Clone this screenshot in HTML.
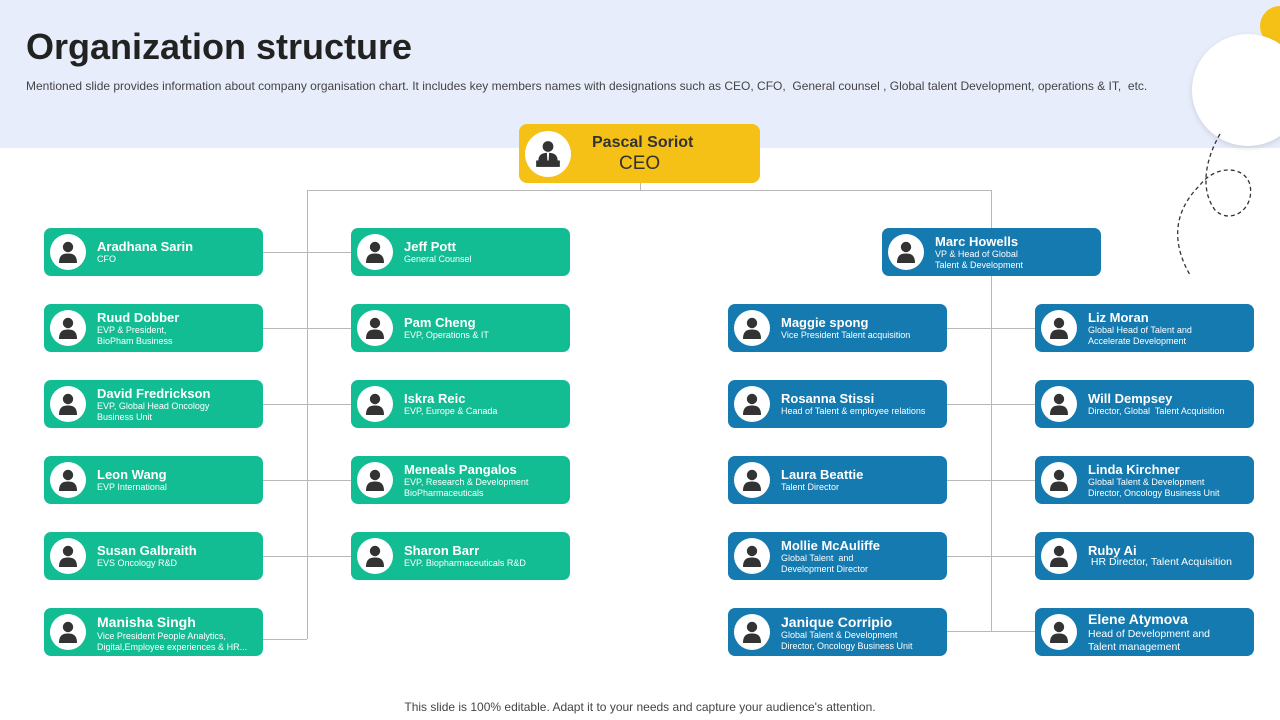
<!DOCTYPE html>
<html><head><meta charset="utf-8"><style>
*{margin:0;padding:0;box-sizing:border-box}
body{width:1280px;height:720px;position:relative;background:#fff;font-family:"Liberation Sans",Arial,sans-serif;overflow:hidden}
.hdr{position:absolute;left:0;top:0;width:1280px;height:148px;background:#e8edfb}
h1{position:absolute;left:26px;top:26px;font-size:36px;font-weight:bold;color:#222}
.sub{position:absolute;left:26px;top:79px;font-size:12px;color:#444}
.ln{position:absolute;background:#b8b8b8}
.b{position:absolute;width:219px;height:48px;border-radius:7px;color:#fff}
.g{background:#12bd93}.bl{background:#157aaf}
.av{position:absolute;left:6px;top:6px;width:36px;height:36px;border-radius:50%;background:#fff}
.av svg{position:absolute;left:6px;top:6px}
.n{position:absolute;left:53px;top:11px;font-size:13px;font-weight:bold;white-space:nowrap}
.d{position:absolute;left:53px;top:26px;font-size:9px;line-height:11px;white-space:nowrap}
.t3 .n{top:6px}.t3 .d{top:21px}
</style></head><body>
<div class="hdr"></div>
<h1>Organization structure</h1>
<div class="sub">Mentioned slide provides information about company organisation chart. It includes key members names with designations such as CEO, CFO,&nbsp; General counsel , Global talent Development, operations &amp; IT,&nbsp; etc.</div>
<div style="position:absolute;left:1260px;top:6px;width:40px;height:40px;border-radius:50%;background:#f5c116"></div>
<div style="position:absolute;left:1192px;top:34px;width:112px;height:112px;border-radius:50%;background:#fff;box-shadow:0 2px 6px rgba(0,0,0,0.12)"></div>
<svg style="position:absolute;left:1160px;top:130px" width="110" height="150"><path d="M60 4 C45 30 40 60 55 80 C70 95 95 80 90 55 C85 35 55 35 40 55 C15 80 10 110 30 145" fill="none" stroke="#333" stroke-width="1.3" stroke-dasharray="4 3"/></svg>
<!-- CEO -->
<div style="position:absolute;left:519px;top:124px;width:241px;height:59px;border-radius:8px;background:#f5c116">
<div style="position:absolute;left:6px;top:7px;width:46px;height:46px;border-radius:50%;background:#fff"><svg style="position:absolute;left:10px;top:9px" width="26" height="28" viewBox="0 0 24 26"><circle cx="12" cy="6" r="5" fill="#333"/><path d="M3 20 C3 13 7 12 12 12 C17 12 21 13 21 20Z" fill="#333"/><rect x="1" y="19" width="22" height="6" fill="#333"/><path d="M11 12 L13 12 L12.6 19 L11.4 19Z" fill="#fff"/></svg></div>
<div style="position:absolute;left:73px;top:10px;font-size:16px;font-weight:bold;color:#333">Pascal Soriot</div>
<div style="position:absolute;left:100px;top:29px;font-size:19px;color:#333">CEO</div>
</div>
<!-- lines -->
<div class="ln" style="left:640px;top:183px;width:1px;height:8px"></div>
<div class="ln" style="left:307px;top:190px;width:685px;height:1px"></div>
<div class="ln" style="left:307px;top:190px;width:1px;height:449px"></div>
<div class="ln" style="left:991px;top:190px;width:1px;height:441px"></div>
<div class="ln" style="left:263px;top:252px;width:88px;height:1px"></div>
<div class="ln" style="left:263px;top:328px;width:88px;height:1px"></div>
<div class="ln" style="left:263px;top:404px;width:88px;height:1px"></div>
<div class="ln" style="left:263px;top:480px;width:88px;height:1px"></div>
<div class="ln" style="left:263px;top:556px;width:88px;height:1px"></div>
<div class="ln" style="left:263px;top:639px;width:44px;height:1px"></div>
<div class="ln" style="left:947px;top:328px;width:88px;height:1px"></div>
<div class="ln" style="left:947px;top:404px;width:88px;height:1px"></div>
<div class="ln" style="left:947px;top:480px;width:88px;height:1px"></div>
<div class="ln" style="left:947px;top:556px;width:88px;height:1px"></div>
<div class="ln" style="left:947px;top:631px;width:88px;height:1px"></div>

<svg width="0" height="0" style="position:absolute"><defs><symbol id="p" viewBox="0 0 24 24"><circle cx="12" cy="7" r="5.2" fill="#333"/><path d="M3 23 C3 15 7 13.5 12 13.5 C17 13.5 21 15 21 23Z" fill="#333"/></symbol></defs></svg>

<div class="b g" style="left:44px;top:228px"><div class="av"><svg width="24" height="24"><use href="#p"/></svg></div><div class="n">Aradhana Sarin</div><div class="d">CFO</div></div>
<div class="b g t3" style="left:44px;top:304px"><div class="av"><svg width="24" height="24"><use href="#p"/></svg></div><div class="n">Ruud Dobber</div><div class="d">EVP &amp; President,<br>BioPham Business</div></div>
<div class="b g t3" style="left:44px;top:380px"><div class="av"><svg width="24" height="24"><use href="#p"/></svg></div><div class="n">David Fredrickson</div><div class="d">EVP, Global Head Oncology<br>Business Unit</div></div>
<div class="b g" style="left:44px;top:456px"><div class="av"><svg width="24" height="24"><use href="#p"/></svg></div><div class="n">Leon Wang</div><div class="d">EVP International</div></div>
<div class="b g" style="left:44px;top:532px"><div class="av"><svg width="24" height="24"><use href="#p"/></svg></div><div class="n">Susan Galbraith</div><div class="d">EVS Oncology R&amp;D</div></div>
<div class="b g t3" style="left:44px;top:608px"><div class="av"><svg width="24" height="24"><use href="#p"/></svg></div><div class="n" style="font-size:14px">Manisha Singh</div><div class="d" style="top:23px">Vice President People Analytics,<br>Digital,Employee experiences &amp; HR...</div></div>

<div class="b g" style="left:351px;top:228px"><div class="av"><svg width="24" height="24"><use href="#p"/></svg></div><div class="n">Jeff Pott</div><div class="d">General Counsel</div></div>
<div class="b g" style="left:351px;top:304px"><div class="av"><svg width="24" height="24"><use href="#p"/></svg></div><div class="n">Pam Cheng</div><div class="d">EVP, Operations &amp; IT</div></div>
<div class="b g" style="left:351px;top:380px"><div class="av"><svg width="24" height="24"><use href="#p"/></svg></div><div class="n">Iskra Reic</div><div class="d">EVP, Europe &amp; Canada</div></div>
<div class="b g t3" style="left:351px;top:456px"><div class="av"><svg width="24" height="24"><use href="#p"/></svg></div><div class="n">Meneals Pangalos</div><div class="d">EVP, Research &amp; Development<br>BioPharmaceuticals</div></div>
<div class="b g" style="left:351px;top:532px"><div class="av"><svg width="24" height="24"><use href="#p"/></svg></div><div class="n">Sharon Barr</div><div class="d">EVP. Biopharmaceuticals R&amp;D</div></div>

<div class="b bl t3" style="left:882px;top:228px"><div class="av"><svg width="24" height="24"><use href="#p"/></svg></div><div class="n">Marc Howells</div><div class="d">VP &amp; Head of Global<br>Talent &amp; Development</div></div>

<div class="b bl" style="left:728px;top:304px"><div class="av"><svg width="24" height="24"><use href="#p"/></svg></div><div class="n">Maggie spong</div><div class="d">Vice President Talent acquisition</div></div>
<div class="b bl" style="left:728px;top:380px"><div class="av"><svg width="24" height="24"><use href="#p"/></svg></div><div class="n">Rosanna Stissi</div><div class="d">Head of Talent &amp; employee relations</div></div>
<div class="b bl" style="left:728px;top:456px"><div class="av"><svg width="24" height="24"><use href="#p"/></svg></div><div class="n">Laura Beattie</div><div class="d">Talent Director</div></div>
<div class="b bl t3" style="left:728px;top:532px"><div class="av"><svg width="24" height="24"><use href="#p"/></svg></div><div class="n">Mollie McAuliffe</div><div class="d">Global Talent&nbsp; and<br>Development Director</div></div>
<div class="b bl t3" style="left:728px;top:608px"><div class="av"><svg width="24" height="24"><use href="#p"/></svg></div><div class="n" style="font-size:14px">Janique Corripio</div><div class="d" style="top:22px">Global Talent &amp; Development<br>Director, Oncology Business Unit</div></div>

<div class="b bl t3" style="left:1035px;top:304px"><div class="av"><svg width="24" height="24"><use href="#p"/></svg></div><div class="n">Liz Moran</div><div class="d">Global Head of Talent and<br>Accelerate Development</div></div>
<div class="b bl" style="left:1035px;top:380px"><div class="av"><svg width="24" height="24"><use href="#p"/></svg></div><div class="n">Will Dempsey</div><div class="d">Director, Global&nbsp; Talent Acquisition</div></div>
<div class="b bl t3" style="left:1035px;top:456px"><div class="av"><svg width="24" height="24"><use href="#p"/></svg></div><div class="n">Linda Kirchner</div><div class="d">Global Talent &amp; Development<br>Director, Oncology Business Unit</div></div>
<div class="b bl" style="left:1035px;top:532px"><div class="av"><svg width="24" height="24"><use href="#p"/></svg></div><div class="n">Ruby Ai</div><div class="d" style="font-size:10.5px;top:25px">&nbsp;HR Director, Talent Acquisition</div></div>
<div class="b bl t3" style="left:1035px;top:608px"><div class="av"><svg width="24" height="24"><use href="#p"/></svg></div><div class="n" style="font-size:14px;top:3px">Elene Atymova</div><div class="d" style="font-size:10.5px;top:20px;line-height:13px">Head of Development and<br>Talent management</div></div>

<div style="position:absolute;left:0;width:1280px;top:700px;text-align:center;font-size:12px;color:#444">This slide is 100% editable. Adapt it to your needs and capture your audience's attention.</div>
</body></html>
